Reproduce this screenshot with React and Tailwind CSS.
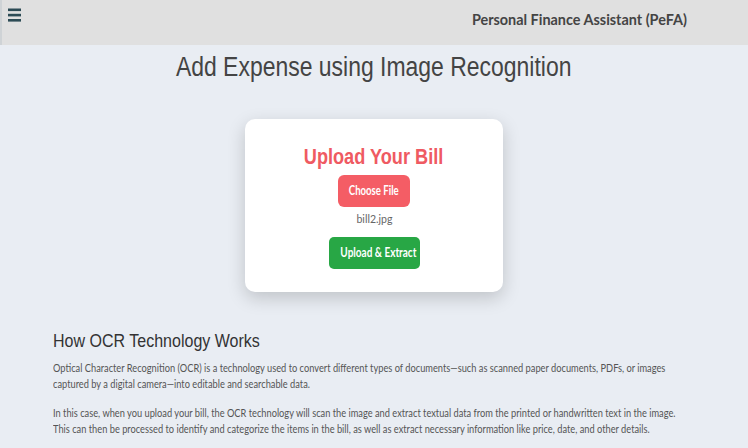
function Header() {
  return (
    <header className="h-[45px] bg-[#e0e0e0] border-l-2 border-[#cfd3d6] flex items-start justify-between">
      <button className="ml-[5px] mt-[7px] text-[#2c4b55]">
        <svg width="16" height="16" viewBox="0 0 16 16">
          <rect x="1" y="1.5" width="13" height="2.6" fill="currentColor" />
          <rect x="1" y="6.8" width="13" height="2.6" fill="currentColor" />
          <rect x="1" y="12" width="13" height="2.6" fill="currentColor" />
        </svg>
      </button>
      <h1 className="mr-[61px] mt-[7px] text-[16px] font-bold text-[#444] font-['Lato',sans-serif] whitespace-nowrap scale-x-[0.9] origin-right">
        Personal Finance Assistant (PeFA)
      </h1>
    </header>
  );
}

function UploadCard() {
  return (
    <div className="w-[258px] h-[173px] bg-white rounded-[10px] shadow-[0_6px_18px_rgba(0,0,0,0.18)] flex flex-col items-center pt-[25px]">
      <h2 className="text-[22px] leading-[26px] font-bold text-[#ef5a62] font-['Liberation_Sans',sans-serif] whitespace-nowrap scale-x-[0.825]">
        Upload Your Bill
      </h2>
      <button className="mt-[5px] w-[72px] h-[32px] rounded-[6px] bg-[#f45d65] text-white text-[13px] font-bold whitespace-nowrap">
        <span className="inline-block scale-x-[0.74]">Choose File</span>
      </button>
      <p className="mt-[3px] text-[12px] text-[#666]">
        <span className="inline-block scale-x-[0.88]">bill2.jpg</span>
      </p>
      <button className="mt-[9px] w-[91px] h-[32px] rounded-[5px] bg-[#28a745] text-white text-[13px] font-bold whitespace-nowrap">
        <span className="inline-block scale-x-[0.77]">Upload &amp; Extract</span>
      </button>
    </div>
  );
}

export default function App() {
  return (
    <div className="w-[748px] h-[448px] overflow-hidden bg-[#e9edf3] font-['Lato',sans-serif]">
      <Header />
      <main className="flex flex-col items-center">
        <h1 className="mt-[5px] text-[27px] leading-[34px] text-[#444] font-['Liberation_Sans',sans-serif] whitespace-nowrap scale-x-[0.85]">
          Add Expense using Image Recognition
        </h1>
        <div className="mt-[35px]">
          <UploadCard />
        </div>
      </main>
      <section className="px-[53px] mt-[38px] text-[#555]">
        <h3 className="text-[18px] leading-[22px] text-[#333] font-['Liberation_Sans',sans-serif] whitespace-nowrap scale-x-[0.89] origin-left">
          How OCR Technology Works
        </h3>
        <div className="w-[820px] origin-left scale-x-[0.806] whitespace-nowrap text-[11.5px] leading-[16px]">
          <p className="mt-[8px]">
            Optical Character Recognition (OCR) is a technology used to convert different types of documents—such as scanned paper documents, PDFs, or images
            <br />
            captured by a digital camera—into editable and searchable data.
          </p>
          <p className="mt-[13px]">
            In this case, when you upload your bill, the OCR technology will scan the image and extract textual data from the printed or handwritten text in the image.
            <br />
            This can then be processed to identify and categorize the items in the bill, as well as extract necessary information like price, date, and other details.
          </p>
        </div>
      </section>
    </div>
  );
}
